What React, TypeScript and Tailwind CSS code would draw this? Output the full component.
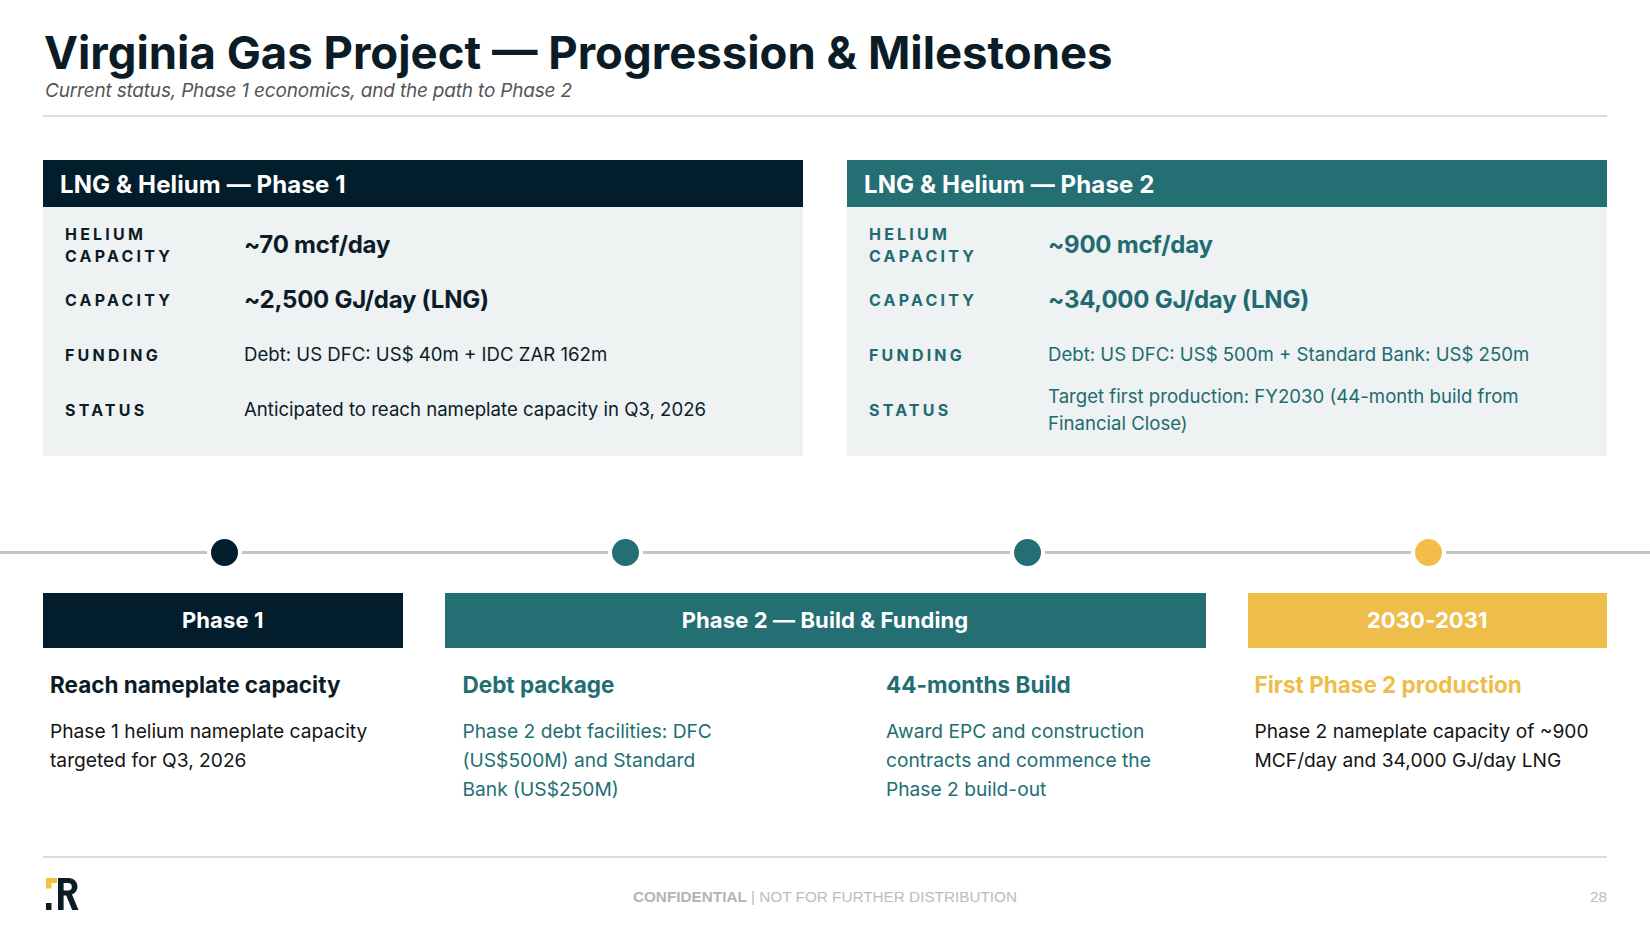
type Row = { label: string[]; value: string; big?: boolean };

const phase1: Row[] = [
  { label: ["Helium", "Capacity"], value: "~70 mcf/day", big: true },
  { label: ["Capacity"], value: "~2,500 GJ/day (LNG)", big: true },
  { label: ["Funding"], value: "Debt: US DFC: US$ 40m + IDC ZAR 162m" },
  { label: ["Status"], value: "Anticipated to reach nameplate capacity in Q3, 2026" },
];

const phase2: Row[] = [
  { label: ["Helium", "Capacity"], value: "~900 mcf/day", big: true },
  { label: ["Capacity"], value: "~34,000 GJ/day (LNG)", big: true },
  { label: ["Funding"], value: "Debt: US DFC: US$ 500m + Standard Bank: US$ 250m" },
  { label: ["Status"], value: "Target first production: FY2030 (44-month build from Financial Close)" },
];

const milestones = [
  {
    title: "Reach nameplate capacity",
    body: "Phase 1 helium nameplate capacity targeted for Q3, 2026",
    wrap: "pl-[7px]",
    head: "text-[#0b1c27]",
    text: "text-[#141414] max-w-[345px]",
  },
  {
    title: "Debt package",
    body: "Phase 2 debt facilities: DFC (US$500M) and Standard Bank (US$250M)",
    wrap: "pl-[18px]",
    head: "text-[#226e73]",
    text: "text-[#226e73] max-w-[272px]",
  },
  {
    title: "44-months Build",
    body: "Award EPC and construction contracts and commence the Phase 2 build-out",
    wrap: "pl-[40px]",
    head: "text-[#226e73]",
    text: "text-[#226e73] max-w-[272px]",
  },
  {
    title: "First Phase 2 production",
    body: "Phase 2 nameplate capacity of ~900 MCF/day and 34,000 GJ/day LNG",
    wrap: "pl-[7px]",
    head: "text-[#efbd4a]",
    text: "text-[#141414] max-w-[345px]",
  },
];

function PhaseCard({ title, rows, header, ink }: { title: string; rows: Row[]; header: string; ink: string }) {
  return (
    <div className="bg-[#eef2f3]">
      <div className={`h-[47px] flex items-center pl-[17px] pt-[2px] text-white text-[24px] font-bold tracking-[0.005em] ${header}`}>
        {title}
      </div>
      <div className={`pt-[10px] pb-[19px] pl-[22px] pr-[20px] ${ink}`}>
        {rows.map((r) => (
          <div key={r.label.join(" ") + r.value} className="h-[55px] flex items-center">
            <div className="w-[179px] shrink-0 text-[16px] font-bold uppercase tracking-[0.2em] leading-[22px]">
              {r.label.map((l) => (
                <div key={l}>{l}</div>
              ))}
            </div>
            {r.big ? (
              <div className="text-[24px] font-bold tracking-[-0.01em]">{r.value}</div>
            ) : (
              <div className="text-[18.6px] leading-[27px] max-w-[500px]">{r.value}</div>
            )}
          </div>
        ))}
      </div>
    </div>
  );
}

function Logo() {
  return (
    <svg width="34" height="34" viewBox="0 0 34 34" className="block">
      <path d="M0 1H11V6H5.5V11.5H0Z" fill="#f5bf42" />
      <rect x="0" y="26" width="5.5" height="7" fill="#0b1c27" />
      <path
        fillRule="evenodd"
        fill="#0b1c27"
        d="M12 1H22.5A8.6 8.6 0 0 1 26 17.6L32.5 33H26.2L20.3 18.6H17.6V33H12ZM17.6 6V13.6H22A3.8 3.8 0 0 0 22 6Z"
      />
    </svg>
  );
}

export default function App() {
  return (
    <div className="w-[1650px] h-[938px] bg-white flex flex-col overflow-hidden font-['Inter',sans-serif]">
      <div className="px-[43px] pt-[30px]">
        <h1 className="text-[45.5px] leading-[46px] font-bold text-[#0b1c27] tracking-normal pl-[1px]">
          Virginia Gas Project — Progression &amp; Milestones
        </h1>
        <p className="mt-[3px] text-[19px] leading-[23px] italic text-[#555] pl-[2px] tracking-[-0.01em]">
          Current status, Phase 1 economics, and the path to Phase 2
        </p>
        <div className="mt-[13px] h-[2px] bg-[#dcdcdc]" />

        <div className="mt-[43px] grid grid-cols-2 gap-x-[44px]">
          <PhaseCard title="LNG & Helium — Phase 1" rows={phase1} header="bg-[#021d2b]" ink="text-[#0b1c27]" />
          <PhaseCard title="LNG & Helium — Phase 2" rows={phase2} header="bg-[#236f74]" ink="text-[#216b70]" />
        </div>
      </div>

      <div className="relative mt-[83px] h-[27px]">
        <div className="absolute left-0 right-0 top-[12px] h-[3px] bg-[#c4c4c4]" />
        <div className="relative grid grid-cols-4 gap-x-[42px] px-[43px] h-full">
          <div className="flex justify-center pl-[3px]">
            <span className="w-[27px] h-[27px] rounded-full bg-[#021d2b] ring-4 ring-white" />
          </div>
          <div className="flex justify-center pl-[3px]">
            <span className="w-[27px] h-[27px] rounded-full bg-[#236f74] ring-4 ring-white" />
          </div>
          <div className="flex justify-center pl-[3px]">
            <span className="w-[27px] h-[27px] rounded-full bg-[#236f74] ring-4 ring-white" />
          </div>
          <div className="flex justify-center pl-[2px]">
            <span className="w-[27px] h-[27px] rounded-full bg-[#f3bd4c] ring-4 ring-white" />
          </div>
        </div>
      </div>

      <div className="px-[43px]">
        <div className="mt-[27px] grid grid-cols-4 gap-x-[42px] text-white text-[22px] font-bold tracking-[0.005em]">
          <div className="h-[55px] flex items-center justify-center bg-[#021d2b]">Phase 1</div>
          <div className="col-span-2 h-[55px] flex items-center justify-center bg-[#236f74]">
            Phase 2 — Build &amp; Funding
          </div>
          <div className="h-[55px] flex items-center justify-center bg-[#efbd4a]">2030-2031</div>
        </div>

        <div className="mt-[24px] grid grid-cols-4 gap-x-[42px]">
          {milestones.map((m) => (
            <div key={m.title} className={m.wrap}>
              <div className={`text-[22.5px] leading-[25px] font-bold ${m.head}`}>{m.title}</div>
              <p className={`mt-[20px] text-[19.2px] leading-[29px] ${m.text}`}>{m.body}</p>
            </div>
          ))}
        </div>
      </div>

      <div className="mt-auto px-[43px] pb-[27px]">
        <div className="h-[2px] bg-[#dcdcdc]" />
        <div className="mt-[19px] grid grid-cols-[1fr_auto_1fr] items-center">
          <div className="pl-[3px]">
            <Logo />
          </div>
          <div className="pt-[6px] text-[15.3px] text-[#bcbcbc] font-['Liberation_Sans',Arial,sans-serif]">
            <span className="font-bold text-[#b4b4b4]">CONFIDENTIAL</span> | NOT FOR FURTHER DISTRIBUTION
          </div>
          <div className="pt-[6px] text-right text-[15.3px] text-[#bcbcbc] font-['Liberation_Sans',Arial,sans-serif]">
            28
          </div>
        </div>
      </div>
    </div>
  );
}
